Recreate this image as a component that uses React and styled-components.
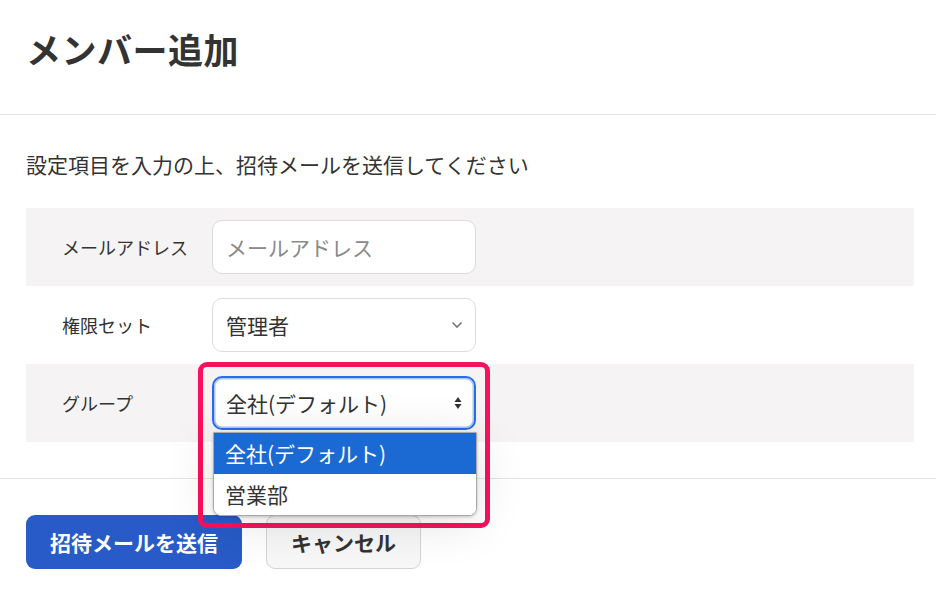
import React from 'react'
import styled, { createGlobalStyle } from 'styled-components'

const GlobalStyle = createGlobalStyle`
  html, body {
    margin: 0;
    padding: 0;
    background: #fff;
    font-family: 'Noto Sans CJK JP', 'Noto Sans', sans-serif;
    color: #333;
  }
`

const Page = styled.div`
  width: 936px;
  height: 592px;
  overflow: hidden;
`

const Header = styled.header`
  height: 115px;
  box-sizing: border-box;
  padding: 24px 26px 0;
  border-bottom: 1px solid #e4e4e4;

  h1 {
    margin: 0;
    font-size: 35px;
    line-height: 50px;
    font-weight: 700;
    color: #333;
    letter-spacing: 0.5px;
  }
`

const Body = styled.section`
  padding: 34px 22px 36px 26px;
  border-bottom: 1px solid #e4e4e4;
`

const Lead = styled.p`
  margin: 0 0 29px;
  font-size: 21px;
  line-height: 30px;
  color: #333;
`

const Row = styled.div`
  display: flex;
  align-items: center;
  height: 78px;
  padding-left: 36px;
  background: ${({ $shaded }) => ($shaded ? '#f5f3f4' : '#fff')};
`

const Label = styled.label`
  width: 150px;
  font-size: 18px;
  color: #333;
`

const Field = styled.div`
  position: relative;
  width: 264px;
`

const TextInput = styled.input`
  box-sizing: border-box;
  width: 100%;
  height: 54px;
  padding: 0 13px;
  border: 1px solid #dcdcdc;
  border-radius: 10px;
  font-family: inherit;
  font-size: 21px;
  color: #333;
  background: #fff;
  outline: none;

  &::placeholder {
    color: #8a8a8a;
  }
`

const SelectBox = styled.div`
  box-sizing: border-box;
  display: flex;
  align-items: center;
  justify-content: space-between;
  height: 54px;
  padding: 0 12px 0 13px;
  border: ${({ $focused }) => ($focused ? '2px solid #2a6cf0' : '1px solid #dcdcdc')};
  box-shadow: ${({ $focused }) => ($focused ? 'inset 0 0 0 1.5px #a9c8f5' : 'none')};
  border-radius: 10px;
  background: #fff;
  font-size: 21px;
  color: #333;
  padding-left: ${({ $focused }) => ($focused ? '12px' : '13px')};
`

const Highlight = styled.div`
  position: absolute;
  left: -14px;
  top: -14px;
  width: 292px;
  height: 166px;
  box-sizing: border-box;
  border: 5px solid #f8115c;
  border-radius: 9px;
  pointer-events: none;
`

const Options = styled.ul`
  position: absolute;
  left: 1px;
  top: 56px;
  width: 262px;
  margin: 0;
  padding: 0;
  list-style: none;
  background: #fff;
  border: 1px solid #a8a8a8;
  border-radius: 0 0 8px 8px;
  overflow: hidden;
  box-shadow: 0 6px 50px rgba(0, 0, 0, 0.12), 0 1px 3px rgba(0, 0, 0, 0.2);
  z-index: 2;
`

const Option = styled.li`
  height: 41px;
  line-height: 40px;
  padding: 0 11px;
  font-size: 21px;
  background: ${({ $active }) => ($active ? '#1b69d2' : '#fff')};
  color: ${({ $active }) => ($active ? '#fff' : '#333')};
`

const Footer = styled.div`
  display: flex;
  gap: 24px;
  padding: 36px 26px;
`

const Button = styled.button`
  height: 54px;
  padding: 0;
  border-radius: 9px;
  font-family: inherit;
  font-size: 21px;
  font-weight: 700;
  cursor: pointer;
  border: ${({ $primary }) => ($primary ? 'none' : '1px solid #d4d4d4')};
  background: ${({ $primary }) => ($primary ? '#285bc7' : '#f7f7f7')};
  color: ${({ $primary }) => ($primary ? '#fff' : '#333')};
  width: ${({ $primary }) => ($primary ? '216px' : '155px')};
`

const Chevron = () => (
  <svg width='12' height='8' viewBox='0 0 12 8'>
    <path d='M1.5 1.5 6 6l4.5-4.5' fill='none' stroke='#777' strokeWidth='1.6' />
  </svg>
)

const UpDown = () => (
  <svg width='8' height='14' viewBox='0 0 8 14'>
    <path d='M4 1 7.5 6h-7z' fill='#333' />
    <path d='M4 13 7.5 8h-7z' fill='#333' />
  </svg>
)

const App = () => (
  <Page>
    <GlobalStyle />
    <Header>
      <h1>メンバー追加</h1>
    </Header>
    <Body>
      <Lead>設定項目を入力の上、招待メールを送信してください</Lead>
      <Row $shaded>
        <Label>メールアドレス</Label>
        <Field>
          <TextInput placeholder='メールアドレス' />
        </Field>
      </Row>
      <Row>
        <Label>権限セット</Label>
        <Field>
          <SelectBox>
            <span>管理者</span>
            <Chevron />
          </SelectBox>
        </Field>
      </Row>
      <Row $shaded>
        <Label>グループ</Label>
        <Field>
          <SelectBox $focused>
            <span>全社(デフォルト)</span>
            <UpDown />
          </SelectBox>
          <Options>
            <Option $active>全社(デフォルト)</Option>
            <Option>営業部</Option>
          </Options>
          <Highlight />
        </Field>
      </Row>
    </Body>
    <Footer>
      <Button $primary>招待メールを送信</Button>
      <Button>キャンセル</Button>
    </Footer>
  </Page>
)

export default App
